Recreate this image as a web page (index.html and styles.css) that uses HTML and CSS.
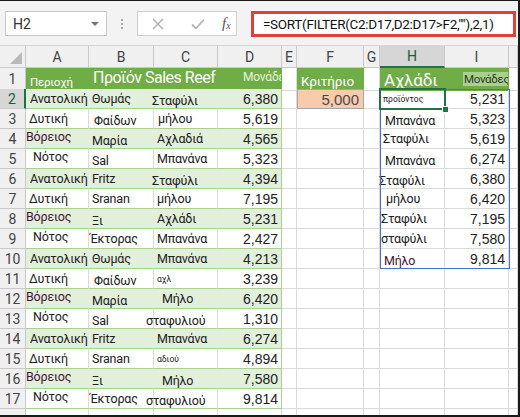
FILE: index.html
```html
<!DOCTYPE html>
<html lang="el">
<head>
    <meta charset="UTF-8">
    <title>SORT FILTER</title>
    <link rel="stylesheet" href="styles.css">
</head>
<body>

<div class="frame">

    <div class="toolbar">
        <div class="namebox"><span>H2</span><span class="caret"></span></div>
        <div class="grip"><i></i><i></i><i></i></div>
        <div class="fxbox">
            <svg class="ico-x" width="12" height="12" viewBox="0 0 12 12"><path d="M1 1L11 11M11 1L1 11" stroke="#b4b4b4" stroke-width="1.6" fill="none"/></svg>
            <svg class="ico-ok" width="14" height="12" viewBox="0 0 14 12"><path d="M1 6.5L5 10.5L13 1.5" stroke="#b4b4b4" stroke-width="1.8" fill="none"/></svg>
            <span class="fx">f<sub>x</sub></span>
        </div>
        <div class="formula">=SORT(FILTER(C2:D17,D2:D17&gt;F2,""),2,1)</div>
    </div>

    <div class="sheet">

        <div class="row colhead">
            <div class="c corner"><span class="tri"></span></div>
            <div class="c">A</div>
            <div class="c">B</div>
            <div class="c">C</div>
            <div class="c">D</div>
            <div class="c">E</div>
            <div class="c">F</div>
            <div class="c">G</div>
            <div class="c sel-col">H</div>
            <div class="c">I</div>
            <div class="c"></div>
        </div>

        <!-- γραμμή 1: επικεφαλίδες πίνακα -->
        <div class="row r1">
            <div class="c rh">1</div>
            <div class="c th"><span class="h-small">Περιοχή</span></div>
            <div class="c th span2"><span class="h-big">Προϊόν Sales Reef</span></div>
            <div class="c th clip"><span class="h-units">Μονάδες</span></div>
            <div class="c"></div>
            <div class="c th"><span class="h-crit">Κριτήριο</span></div>
            <div class="c"></div>
            <div class="c th"><span class="h-pear">Αχλάδι</span></div>
            <div class="c th clip"><span class="h-units2">Μονάδες</span></div>
            <div class="c"></div>
        </div>

        <div class="row band">
            <div class="c rh sel-row">2</div>
            <div class="c t pl4">Ανατολική</div>
            <div class="c t pl3">Θωμάς</div>
            <div class="c t mln2 lo">Σταφύλι</div>
            <div class="c t num">6,380</div>
            <div class="c"></div>
            <div class="c crit">5,000</div>
            <div class="c"></div>
            <div class="c pl3"><span class="tiny">προϊόντος</span></div>
            <div class="c num">5,231</div>
            <div class="c"></div>
        </div>

        <div class="row">
            <div class="c rh">3</div>
            <div class="c t pl3">Δυτική</div>
            <div class="c t pl5 lo">Φαίδων</div>
            <div class="c t pl4">μήλου</div>
            <div class="c t num">5,619</div>
            <div class="c"></div>
            <div class="c"></div>
            <div class="c"></div>
            <div class="c pl5 lo">Μπανάνα</div>
            <div class="c num">5,323</div>
            <div class="c"></div>
        </div>

        <div class="row band">
            <div class="c rh">4</div>
            <div class="c t pl0 hi dark">Βόρειος</div>
            <div class="c t pl3 lo">Μαρία</div>
            <div class="c t pl3">Αχλαδιά</div>
            <div class="c t num">4,565</div>
            <div class="c"></div>
            <div class="c"></div>
            <div class="c"></div>
            <div class="c pl3">Σταφύλι</div>
            <div class="c num">5,619</div>
            <div class="c"></div>
        </div>

        <div class="row">
            <div class="c rh">5</div>
            <div class="c t pl7 hi">Νότος</div>
            <div class="c t pl3 lo">Sal</div>
            <div class="c t pl3">Μπανάνα</div>
            <div class="c t num">5,323</div>
            <div class="c"></div>
            <div class="c"></div>
            <div class="c"></div>
            <div class="c pl5 lo">Μπανάνα</div>
            <div class="c num">6,274</div>
            <div class="c"></div>
        </div>

        <div class="row band">
            <div class="c rh">6</div>
            <div class="c t pl4">Ανατολική</div>
            <div class="c t pl3">Fritz</div>
            <div class="c t mln2 lo">Σταφύλι</div>
            <div class="c t num">4,394</div>
            <div class="c"></div>
            <div class="c"></div>
            <div class="c"></div>
            <div class="c mln1 lo">Σταφύλι</div>
            <div class="c num">6,380</div>
            <div class="c"></div>
        </div>

        <div class="row">
            <div class="c rh">7</div>
            <div class="c t pl3">Δυτική</div>
            <div class="c t pl3">Sranan</div>
            <div class="c t pl3">μήλου</div>
            <div class="c t num">7,195</div>
            <div class="c"></div>
            <div class="c"></div>
            <div class="c"></div>
            <div class="c pl6">μήλου</div>
            <div class="c num">6,420</div>
            <div class="c"></div>
        </div>

        <div class="row band">
            <div class="c rh">8</div>
            <div class="c t pl0 hi dark">Βόρειος</div>
            <div class="c t pl3 lo">Ξι</div>
            <div class="c t pl3">Αχλάδι</div>
            <div class="c t num">5,231</div>
            <div class="c"></div>
            <div class="c"></div>
            <div class="c"></div>
            <div class="c pl1">Σταφύλι</div>
            <div class="c num">7,195</div>
            <div class="c"></div>
        </div>

        <div class="row">
            <div class="c rh">9</div>
            <div class="c t pl7 hi">Νότος</div>
            <div class="c t pl1">Έκτορας</div>
            <div class="c t pl3">Μπανάνα</div>
            <div class="c t num">2,427</div>
            <div class="c"></div>
            <div class="c"></div>
            <div class="c"></div>
            <div class="c pl1">σταφύλι</div>
            <div class="c num">7,580</div>
            <div class="c"></div>
        </div>

        <div class="row band">
            <div class="c rh">10</div>
            <div class="c t pl4">Ανατολική</div>
            <div class="c t pl3">Θωμάς</div>
            <div class="c t pl3">Μπανάνα</div>
            <div class="c t num">4,213</div>
            <div class="c"></div>
            <div class="c"></div>
            <div class="c"></div>
            <div class="c pl4 lo dark">Μήλο</div>
            <div class="c num">9,814</div>
            <div class="c"></div>
        </div>

        <div class="row">
            <div class="c rh">11</div>
            <div class="c t pl3">Δυτική</div>
            <div class="c t pl5 lo">Φαίδων</div>
            <div class="c t pl3"><span class="tiny">αχλ</span></div>
            <div class="c t num">3,239</div>
            <div class="c"></div>
            <div class="c"></div>
            <div class="c"></div>
            <div class="c"></div>
            <div class="c"></div>
            <div class="c"></div>
        </div>

        <div class="row band">
            <div class="c rh">12</div>
            <div class="c t pl0 hi dark">Βόρειος</div>
            <div class="c t pl3 lo">Μαρία</div>
            <div class="c t pl8">Μήλο</div>
            <div class="c t num">6,420</div>
            <div class="c"></div>
            <div class="c"></div>
            <div class="c"></div>
            <div class="c"></div>
            <div class="c"></div>
            <div class="c"></div>
        </div>

        <div class="row">
            <div class="c rh">13</div>
            <div class="c t pl7 hi">Νότος</div>
            <div class="c t pl3 lo">Sal</div>
            <div class="c t mln8 lo">σταφυλιού</div>
            <div class="c t num">1,310</div>
            <div class="c"></div>
            <div class="c"></div>
            <div class="c"></div>
            <div class="c"></div>
            <div class="c"></div>
            <div class="c"></div>
        </div>

        <div class="row band">
            <div class="c rh">14</div>
            <div class="c t pl4">Ανατολική</div>
            <div class="c t pl3">Fritz</div>
            <div class="c t pl3">Μπανάνα</div>
            <div class="c t num">6,274</div>
            <div class="c"></div>
            <div class="c"></div>
            <div class="c"></div>
            <div class="c"></div>
            <div class="c"></div>
            <div class="c"></div>
        </div>

        <div class="row">
            <div class="c rh">15</div>
            <div class="c t pl3">Δυτική</div>
            <div class="c t pl3">Sranan</div>
            <div class="c t pl3"><span class="tiny">αδιού</span></div>
            <div class="c t num">4,894</div>
            <div class="c"></div>
            <div class="c"></div>
            <div class="c"></div>
            <div class="c"></div>
            <div class="c"></div>
            <div class="c"></div>
        </div>

        <div class="row band">
            <div class="c rh">16</div>
            <div class="c t pl0 hi dark">Βόρειος</div>
            <div class="c t pl3 lo">Ξι</div>
            <div class="c t pl8 lo">Μήλο</div>
            <div class="c t num">7,580</div>
            <div class="c"></div>
            <div class="c"></div>
            <div class="c"></div>
            <div class="c"></div>
            <div class="c"></div>
            <div class="c"></div>
        </div>

        <div class="row">
            <div class="c rh">17</div>
            <div class="c t pl7 hi">Νότος</div>
            <div class="c t pl1">Έκτορας</div>
            <div class="c t mln8 lo">σταφυλιού</div>
            <div class="c t num">9,814</div>
            <div class="c"></div>
            <div class="c"></div>
            <div class="c"></div>
            <div class="c"></div>
            <div class="c"></div>
            <div class="c"></div>
        </div>

        <div class="row r18">
            <div class="c rh"></div>
            <div class="c"></div>
            <div class="c"></div>
            <div class="c"></div>
            <div class="c"></div>
            <div class="c"></div>
            <div class="c"></div>
            <div class="c"></div>
            <div class="c"></div>
            <div class="c"></div>
            <div class="c"></div>
        </div>

        <!-- περίγραμμα του spill και επιλεγμένο κελί H2 -->
        <div class="spill"></div>
        <div class="selected"><span class="handle"></span></div>
    </div>

</div>

</body>
</html>
```

FILE: styles.css
```css
*{
    margin: 0;
    padding: 0;
    box-sizing: border-box;
}

body{
    width: 520px;
    height: 417px;
    overflow: hidden;
    background-color: #fff;
    font-family: "Liberation Sans", Arial, sans-serif;
}

.frame{
    width: 520px;
    height: 417px;
    border-top: 1px solid #1a1a1a;
    border-right: 2px solid #1a1a1a;
    border-bottom: 2px solid #1a1a1a;
    display: flex;
    flex-direction: column;
    overflow: hidden;
}

/* γραμμή τύπων */
.toolbar{
    height: 45px;
    flex: none;
    display: flex;
    align-items: center;
    padding: 1px 0 0 5px;
    background-color: #f3f3f3;
    border-bottom: 1px solid #d6d6d6;
}

.namebox{
    width: 102px;
    height: 25px;
    display: flex;
    align-items: center;
    justify-content: space-between;
    padding: 0 7px 0 7px;
    background-color: #fff;
    border: 1px solid #c8c8c8;
    font-family: Roboto, sans-serif;
    font-size: 14px;
    color: #333;
}

.caret{
    width: 0;
    height: 0;
    border-left: 4px solid transparent;
    border-right: 4px solid transparent;
    border-top: 4px solid #777;
}

.grip{
    width: 3px;
    margin: 0 13px 0 14px;
    display: flex;
    flex-direction: column;
    gap: 2px;
}

.grip i{
    width: 2px;
    height: 2px;
    background-color: #a8a8a8;
}

.fxbox{
    width: 100px;
    height: 25px;
    display: flex;
    align-items: center;
    padding-left: 14px;
    background-color: #fff;
    border: 1px solid #d0d0d0;
}

.ico-ok{
    margin-left: 27px;
}

.fx{
    margin-left: 17px;
    font-family: "Liberation Serif", serif;
    font-style: italic;
    font-size: 15px;
    color: #555;
}

.fx sub{
    font-size: 10px;
    vertical-align: -1px;
}

.formula{
    width: 265px;
    height: 26px;
    margin-left: 14px;
    display: flex;
    align-items: center;
    padding-left: 9px;
    background-color: #fff;
    border: 3px solid #e0403a;
    font-family: Roboto, sans-serif;
    font-size: 13.5px;
    letter-spacing: -0.3px;
    color: #111;
    white-space: nowrap;
}

/* φύλλο */
.sheet{
    flex: 1;
    position: relative;
    font-family: Roboto, sans-serif;
}

.row{
    display: grid;
    grid-template-columns: 26px 63px 65px 64px 64px 15px 67px 16px 65px 64px 1fr;
    height: 20px;
}

.c{
    min-width: 0;
    display: flex;
    align-items: center;
    white-space: nowrap;
    border-right: 1px solid #dadada;
    border-bottom: 1px solid #dadada;
    font-size: 12.5px;
    letter-spacing: -0.2px;
    color: #222;
}

.colhead{
    height: 22px;
    background-color: #f0f0f0;
}

.colhead .c{
    justify-content: center;
    border-color: #c9c9c9;
    font-size: 14px;
    letter-spacing: 0;
    color: #444;
}

.corner{
    position: relative;
}

.tri{
    position: absolute;
    right: 3px;
    bottom: 3px;
    width: 0;
    height: 0;
    border-left: 12px solid transparent;
    border-bottom: 12px solid #b9b9b9;
}

.sel-col{
    background-color: #d6d6d6;
    border-bottom: 2px solid #217346 !important;
    color: #1e5c38 !important;
}

.rh{
    justify-content: center;
    background-color: #f0f0f0;
    border-color: #c9c9c9;
    font-size: 14px;
    letter-spacing: 0;
    color: #444;
}

.sel-row{
    background-color: #d6d6d6;
    border-right: 2px solid #217346;
    color: #1e5c38;
}

.r1{
    height: 21px;
}

.r18{
    height: 10px;
}

/* πίνακας */
.th{
    background-color: #70ad47;
    border-right-color: #70ad47;
    border-bottom-color: #70ad47;
    color: #fff;
}

.span2{
    grid-column: span 2;
}

.clip{
    overflow: hidden;
}

.h-small{
    font-size: 11.5px;
    padding: 6px 0 0 4px;
}

.h-big{
    font-size: 16px;
    letter-spacing: -0.5px;
    padding: 0 0 3px 4px;
}

.h-units{
    font-size: 12px;
    padding: 0 0 4px 25px;
    color: #e6f3dc;
}

.h-crit{
    font-size: 13.5px;
    padding: 4px 0 0 4px;
}

.h-pear{
    font-size: 17px;
    padding: 1px 0 0 4px;
}

.h-units2{
    margin-left: 18px;
    padding: 0 1px;
    font-size: 11.5px;
    letter-spacing: -0.3px;
    color: #2e3a24;
    background-color: #a9d08e;
}

.t{
    border-bottom-color: #a9d08e;
}

.band .t{
    background-color: #e2efda;
    border-right-color: #e2efda;
}

.t.num{
    border-right-color: #a9d08e !important;
}

.num{
    justify-content: flex-end;
    padding-right: 3px;
    font-family: "Liberation Sans", Arial, sans-serif;
    font-size: 14px;
    letter-spacing: 0;
}

.crit{
    justify-content: flex-end;
    padding-right: 4px;
    background-color: #f8cbad;
    border: 1px solid #a6a6a6;
    font-family: "Liberation Sans", Arial, sans-serif;
    font-size: 15px;
    letter-spacing: 0;
    color: #4a4a4a;
}

.tiny{
    font-size: 8.5px;
    letter-spacing: 0;
}

.dark{
    color: #3f1634;
}

.pl0{ padding-left: 0; }
.pl1{ padding-left: 1px; }
.pl3{ padding-left: 3px; }
.pl4{ padding-left: 4px; }
.pl5{ padding-left: 5px; }
.pl6{ padding-left: 6px; }
.pl7{ padding-left: 7px; }
.pl8{ padding-left: 8px; }
.mln1{ margin-left: -1px; }
.mln2{ margin-left: -2px; }
.mln8{ margin-left: -8px; }

.hi{
    padding-bottom: 4px;
}

.lo{
    padding-top: 4px;
}

/* επικάλυψη */
.spill{
    position: absolute;
    left: 380px;
    top: 43px;
    width: 130px;
    height: 180px;
    border: 1px solid #4472c4;
    pointer-events: none;
}

.selected{
    position: absolute;
    left: 379px;
    top: 42px;
    width: 67px;
    height: 22px;
    border: 2px solid #217346;
}

.handle{
    position: absolute;
    right: -5px;
    bottom: -5px;
    width: 7px;
    height: 7px;
    background-color: #217346;
    border: 1px solid #fff;
}
```
